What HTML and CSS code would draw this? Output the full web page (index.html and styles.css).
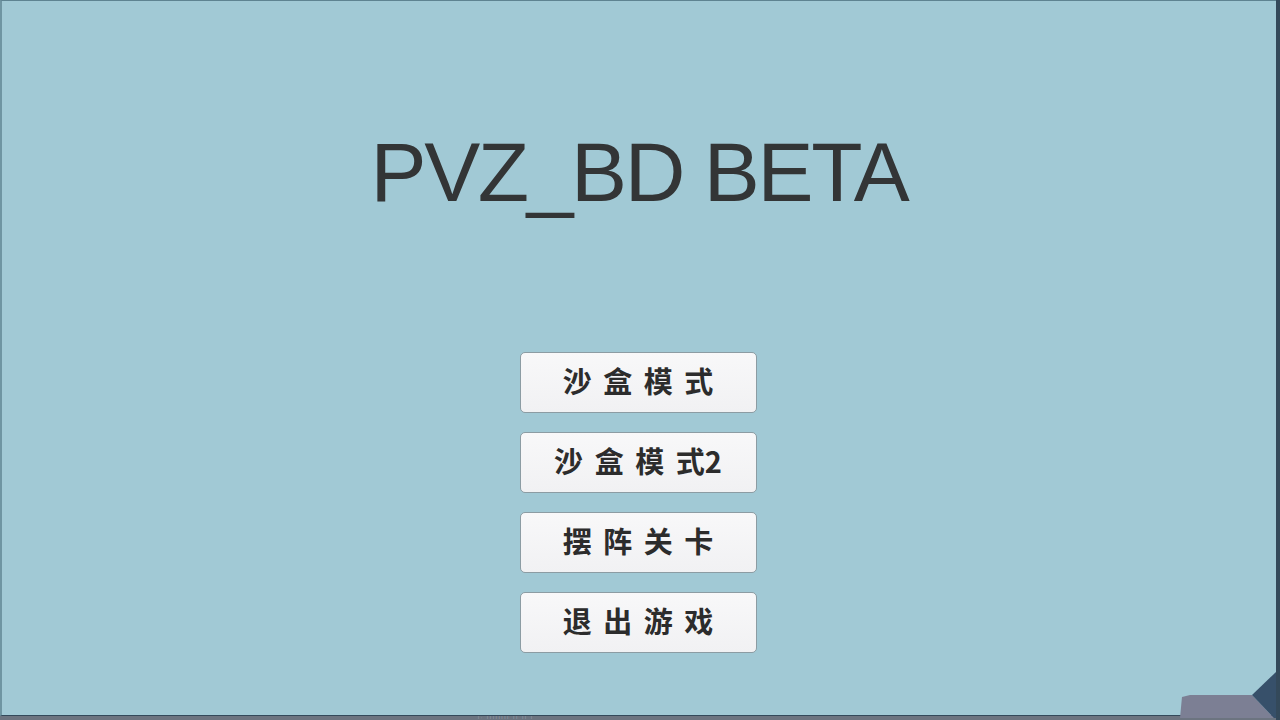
FILE: index.html
```html
<!DOCTYPE html>
<html lang="zh-CN">
<head>
<meta charset="utf-8">
<title>PVZ_BD BETA</title>
<link rel="stylesheet" href="styles.css">
</head>
<body>
<div class="screen">
  <div class="canvas">
    <h1 class="title">PVZ_BD BETA</h1>
    <div class="menu">
      <button class="btn">沙 盒 模 式</button>
      <button class="btn">沙 盒 模 式2</button>
      <button class="btn">摆 阵 关 卡</button>
      <button class="btn">退 出 游 戏</button>
    </div>
  </div>
  <div class="strip"><span class="strip-text">l: llllllll ll ll l</span></div>
  <svg class="corner" width="100" height="50" viewBox="0 0 100 50">
    <polygon points="2,27 10,25 72,25 94,48 0,48" fill="#7c7f94"/>
    <polygon points="72,25 96,2 96,48 94,48" fill="#37506a"/>
  </svg>
</div>
</body>
</html>
```
FILE: styles.css
```css
html, body {
  margin: 0;
  padding: 0;
}
body {
  width: 1280px;
  height: 720px;
  overflow: hidden;
  background: #3b5264;
}
.screen {
  position: relative;
  width: 1280px;
  height: 720px;
  display: flex;
  flex-direction: column;
  background: #34495a;
}
.canvas {
  box-sizing: border-box;
  width: 1276px;
  height: 716px;
  background: #a1c9d5;
  border-top: 1px solid #5e8391;
  border-left: 2px solid #6f95a2;
  border-bottom: 1px solid #33495a;
  display: flex;
  flex-direction: column;
  align-items: center;
}
.title {
  margin: 121px 0 0 0;
  font-family: "Liberation Sans", Arial, sans-serif;
  font-weight: normal;
  font-size: 84px;
  line-height: 100px;
  letter-spacing: -2.4px;
  color: #333536;
  height: 100px;
}
.menu {
  margin-top: 130px;
  display: flex;
  flex-direction: column;
  gap: 20px;
  transform: translateX(-1px);
}
.btn {
  box-sizing: border-box;
  width: 237px;
  height: 61px;
  border: 1px solid #8c9ca3;
  border-radius: 5px;
  background: linear-gradient(#f8f8f9, #f1f1f3);
  font-family: "Noto Sans CJK SC", "Liberation Sans", sans-serif;
  font-weight: bold;
  font-size: 29px;
  word-spacing: 5px;
  color: #2c2c2c;
  padding: 0 0 5px 0;
  line-height: 54px;
  text-align: center;
}
.menu .btn + .btn {
  margin-top: -1px;
}
.strip {
  flex: 1;
  background: #6c7480;
  width: 1276px;
  overflow: hidden;
}
.strip-text {
  display: block;
  margin-left: 478px;
  font-family: "Liberation Sans", sans-serif;
  font-size: 4px;
  line-height: 4px;
  letter-spacing: 2px;
  color: #a3acb8;
}
.corner {
  position: absolute;
  right: 0;
  bottom: 0;
  width: 100px;
  height: 50px;
}
```
